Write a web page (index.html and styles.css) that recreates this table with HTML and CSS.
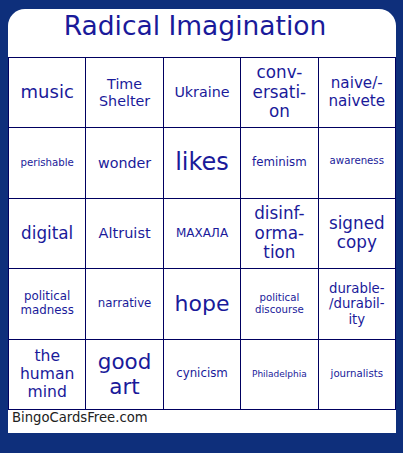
FILE: index.html
```html
<!DOCTYPE html>
<html>
<head>
<meta charset="utf-8">
<link rel="stylesheet" href="styles.css">
</head>
<body>
<div class="card">
  <div class="title">Radical Imagination</div>
  <div class="grid">
    <div class="cell s18">music</div>
    <div class="cell s14">Time<br>Shelter</div>
    <div class="cell s14">Ukraine</div>
    <div class="cell s17">conv-<br>ersati-<br>on</div>
    <div class="cell s15">naive/-<br>naivete</div>

    <div class="cell s10">perishable</div>
    <div class="cell s14">wonder</div>
    <div class="cell s24">likes</div>
    <div class="cell s12">feminism</div>
    <div class="cell s10 up">awareness</div>

    <div class="cell s17">digital</div>
    <div class="cell s145">Altruist</div>
    <div class="cell s11">МАХАЛА</div>
    <div class="cell s17">disinf-<br>orma-<br>tion</div>
    <div class="cell s17">signed<br>copy</div>

    <div class="cell s12">political<br>madness</div>
    <div class="cell s12">narrative</div>
    <div class="cell s23">hope</div>
    <div class="cell s10">political<br>discourse</div>
    <div class="cell s13">durable-<br>/durabil-<br>ity</div>

    <div class="cell s16">the<br>human<br>mind</div>
    <div class="cell s22">good<br>art</div>
    <div class="cell s12">cynicism</div>
    <div class="cell s9">Philadelphia</div>
    <div class="cell s10">journalists</div>
  </div>
  <div class="footer">BingoCardsFree.com</div>
</div>
</body>
</html>
```

FILE: styles.css
```css
html, body {
  margin: 0;
  padding: 0;
}
body {
  background: #0e2f7b;
  width: 403px;
  height: 453px;
  overflow: hidden;
  font-family: "DejaVu Sans", Verdana, sans-serif;
}
.card {
  margin: 9px 0 0 8px;
  width: 388px;
  background: #ffffff;
  border-radius: 17px 17px 0 0;
}
.title {
  height: 48px;
  box-sizing: border-box;
  padding: 2px 14px 0 0;
  text-align: center;
  font-size: 26.5px;
  line-height: 1.164;
  color: #1a1a9a;
}
.grid {
  display: grid;
  grid-template-columns: repeat(5, 1fr);
  grid-template-rows: repeat(5, 1fr);
  height: 353px;
  box-sizing: border-box;
  border-top: 1px solid #000060;
  border-left: 1px solid #000060;
}
.cell {
  display: flex;
  align-items: center;
  justify-content: center;
  text-align: center;
  border-right: 1px solid #000060;
  border-bottom: 1px solid #000060;
  color: #1a1a9a;
  line-height: 1.164;
  overflow: hidden;
}
.up { padding-bottom: 4px; }
.s9 { font-size: 9px; }
.s10 { font-size: 10.2px; }
.s11 { font-size: 12px; }
.s12 { font-size: 11.8px; }
.s13 { font-size: 13.3px; }
.s14 { font-size: 14.3px; }
.s145 { font-size: 14.5px; }
.s15 { font-size: 15.2px; }
.s16 { font-size: 15.6px; }
.s17 { font-size: 16.8px; }
.s18 { font-size: 18px; }
.s22 { font-size: 21.5px; }
.s23 { font-size: 22px; }
.s24 { font-size: 24px; }
.footer {
  height: 23px;
  box-sizing: border-box;
  padding: 0 0 0 4px;
  font-size: 13.2px;
  line-height: 1.164;
  color: #222222;
}
```
